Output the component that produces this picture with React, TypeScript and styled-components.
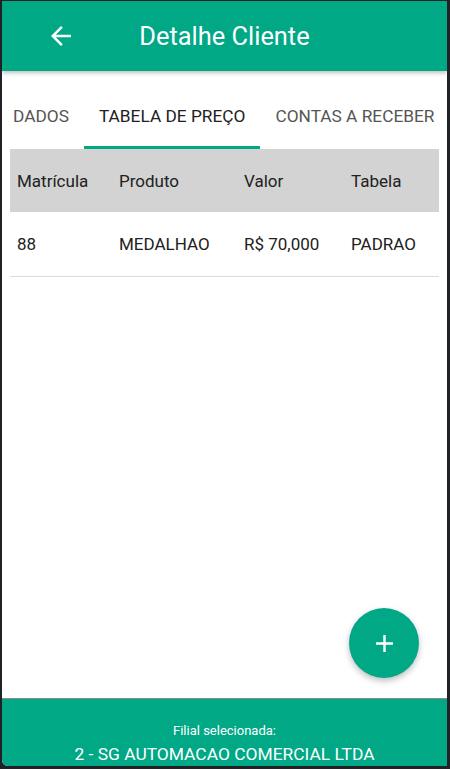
import React from 'react';
import styled, { createGlobalStyle } from 'styled-components';

const green = '#00a886';

const GlobalStyle = createGlobalStyle`
  html, body {
    margin: 0;
    padding: 0;
    background: #1f2124;
  }
  body {
    font-family: Roboto, 'Noto Sans', Arial, sans-serif;
    overflow: hidden;
  }
`;

const Screen = styled.div`
  margin: 1px 3px 0 2px;
  height: 765px;
  background: #fff;
  display: flex;
  flex-direction: column;
  border-bottom-left-radius: 6px;
  overflow: hidden;
`;

const Header = styled.header`
  height: 70px;
  flex-shrink: 0;
  background: ${green};
  display: grid;
  grid-template-columns: 1fr auto 1fr;
  align-items: center;
  box-shadow: 0 2px 4px rgba(0, 0, 0, 0.25);
  position: relative;
  z-index: 2;
`;

const BackButton = styled.button`
  justify-self: start;
  margin-left: 44px;
  width: 30px;
  height: 30px;
  padding: 0;
  border: none;
  background: transparent;
  color: #fff;
  display: flex;
  align-items: center;
  justify-content: center;
`;

const Title = styled.h1`
  margin: 0;
  font-size: 25.4px;
  font-weight: 400;
  color: #fff;
`;

const Tabs = styled.nav`
  height: 78px;
  flex-shrink: 0;
  display: flex;
  align-items: stretch;
  margin-left: -4px;
  white-space: nowrap;
`;

const Tab = styled.div<{ $active?: boolean }>`
  padding: 0 15px;
  display: flex;
  align-items: center;
  padding-top: 15px;
  font-size: 17.3px;
  color: ${(p) => (p.$active ? '#212121' : '#555')};
  border-bottom: 3px solid ${(p) => (p.$active ? green : 'transparent')};
`;

const Main = styled.main`
  flex: 1;
  display: flex;
  flex-direction: column;
  padding: 0 8px;
`;

const Table = styled.div`
  display: flex;
  flex-direction: column;
`;

const Row = styled.div<{ $head?: boolean }>`
  display: grid;
  grid-template-columns: 102px 125px 107px 1fr;
  align-items: center;
  height: ${(p) => (p.$head ? '63px' : '64px')};
  background: ${(p) => (p.$head ? '#d3d3d3' : 'transparent')};
  border-bottom: ${(p) => (p.$head ? 'none' : '1px solid #dcdcdc')};
`;

const Cell = styled.div`
  padding-left: 7px;
  font-size: 17px;
  color: #212121;
`;

const Fab = styled.button`
  margin-top: auto;
  margin-bottom: 20px;
  margin-right: 20px;
  align-self: flex-end;
  width: 70px;
  height: 70px;
  border-radius: 50%;
  border: none;
  background: ${green};
  color: #fff;
  display: flex;
  align-items: center;
  justify-content: center;
  box-shadow: 0 3px 6px rgba(0, 0, 0, 0.25);
`;

const Footer = styled.footer`
  height: 68px;
  flex-shrink: 0;
  background: ${green};
  border-top: 1px solid #8a8a8a;
  display: flex;
  flex-direction: column;
  align-items: center;
  padding-top: 24px;
  box-sizing: border-box;
  color: #fff;
`;

const FooterLabel = styled.div`
  font-size: 13px;
  line-height: 16px;
`;

const FooterValue = styled.div`
  font-size: 17.4px;
  line-height: 20px;
  margin-top: 5px;
`;

const rows = [{ matricula: '88', produto: 'MEDALHAO', valor: 'R$ 70,000', tabela: 'PADRAO' }];

export default function App() {
  return (
    <>
      <GlobalStyle />
      <Screen>
        <Header>
          <BackButton aria-label="Voltar">
            <svg width="30" height="30" viewBox="0 0 24 24" fill="currentColor">
              <path d="M20 11H7.83l5.59-5.59L12 4l-8 8 8 8 1.41-1.41L7.83 13H20v-2z" />
            </svg>
          </BackButton>
          <Title>Detalhe Cliente</Title>
          <span />
        </Header>
        <Tabs>
          <Tab>DADOS</Tab>
          <Tab $active>TABELA DE PREÇO</Tab>
          <Tab>CONTAS A RECEBER</Tab>
        </Tabs>
        <Main>
          <Table>
            <Row $head>
              <Cell>Matrícula</Cell>
              <Cell>Produto</Cell>
              <Cell>Valor</Cell>
              <Cell>Tabela</Cell>
            </Row>
            {rows.map((r) => (
              <Row key={r.matricula}>
                <Cell>{r.matricula}</Cell>
                <Cell>{r.produto}</Cell>
                <Cell>{r.valor}</Cell>
                <Cell>{r.tabela}</Cell>
              </Row>
            ))}
          </Table>
          <Fab aria-label="Adicionar">
            <svg width="29" height="29" viewBox="0 0 24 24" fill="currentColor">
              <path d="M19 13h-6v6h-2v-6H5v-2h6V5h2v6h6v2z" />
            </svg>
          </Fab>
        </Main>
        <Footer>
          <FooterLabel>Filial selecionada:</FooterLabel>
          <FooterValue>2 - SG AUTOMACAO COMERCIAL LTDA</FooterValue>
        </Footer>
      </Screen>
    </>
  );
}
